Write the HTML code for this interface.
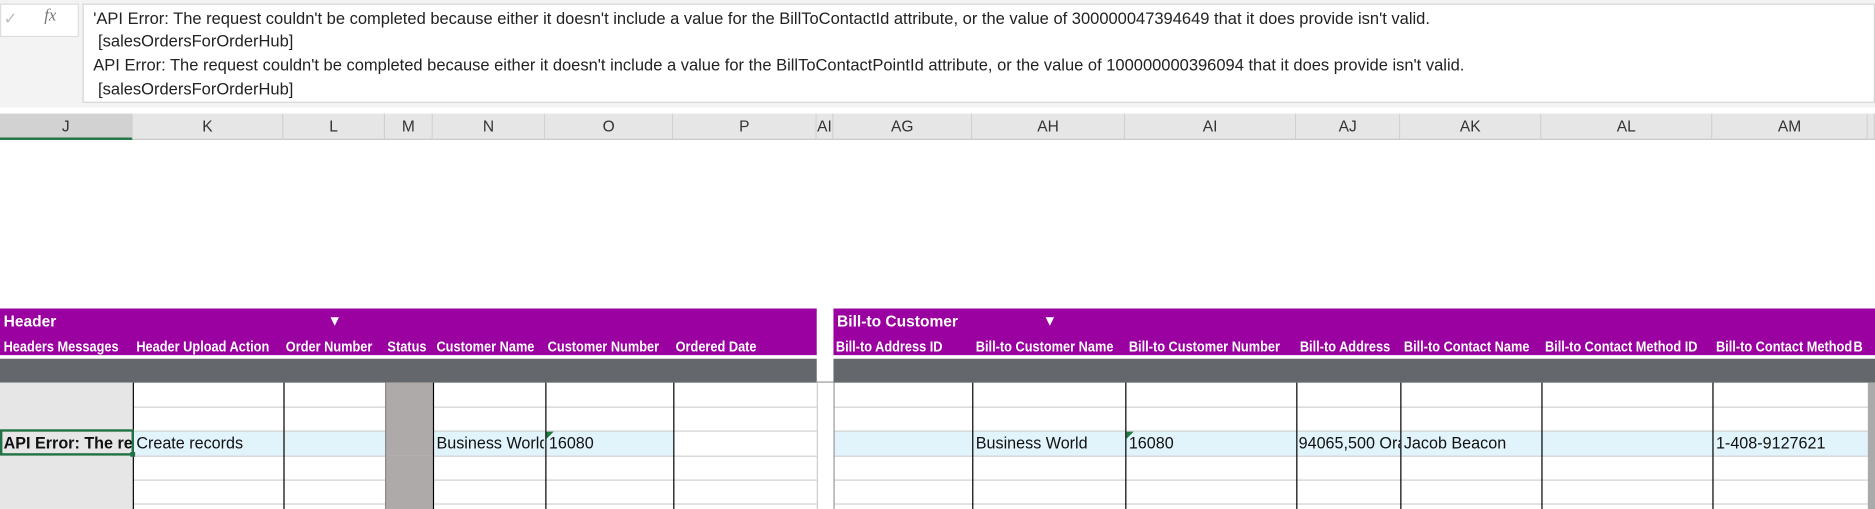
<!DOCTYPE html>
<html><head><meta charset="utf-8"><style>
html,body{margin:0;padding:0;background:#fff;overflow:hidden;width:1875px;height:509px}
#w{position:absolute;left:0;top:0;width:1568px;height:426px;transform:scale(1.19579);transform-origin:0 0;font-family:"Liberation Sans",sans-serif;background:#fff}
.a{position:absolute;white-space:nowrap}
.fb{left:0;top:0;width:1568px;height:90px;background:#f3f3f3}
.fx{left:69px;top:3px;width:1499px;height:83px;background:#fff;border:1px solid #d4d4d4;box-sizing:border-box}
.ft{font-size:13.8px;color:#222;left:78px;transform:scaleX(1.0);transform-origin:0 0}
.ch{top:95px;height:22px;background:#e6e6e6;border-bottom:1px solid #c8c8c8;box-sizing:border-box;font-size:13px;color:#333;text-align:center;line-height:22px;border-right:1px solid #d0d0d0}
.pur{top:258px;height:39px;background:#9b00a0}
.gb{top:300px;height:20px;background:#64676c}
.sh{top:283px;font-size:12px;font-weight:bold;color:#fff;transform:scaleX(.89);transform-origin:0 0}
.vl{top:320px;width:1px;height:106px;background:#000}
.hl{height:1px;background:#d0d0d0}
.dt{top:363px;font-size:13.5px;color:#111}
.tri{width:0;height:0;border-top:6px solid #1e7b3a;border-right:6px solid transparent}
</style></head><body><div id="w">
<div class="a fb"></div>
<div class="a" style="left:0;top:3px;width:66px;height:28px;background:#fff;border:1px solid #ddd;box-sizing:border-box"></div>
<div class="a" style="left:3px;top:7px;font-size:14px;color:#bbb">✓</div>
<div class="a" style="left:37px;top:6px;font-size:14px;font-style:italic;font-family:'Liberation Serif',serif;color:#777">fx</div>
<div class="a fx"></div>
<div class="a ft" style="top:8px">'API Error: The request couldn't be completed because either it doesn't include a value for the BillToContactId attribute, or the value of 300000047394649 that it does provide isn't valid.</div>
<div class="a ft" style="top:27px;left:82px">[salesOrdersForOrderHub]</div>
<div class="a ft" style="top:47px">API Error: The request couldn't be completed because either it doesn't include a value for the BillToContactPointId attribute, or the value of 100000000396094 that it does provide isn't valid.</div>
<div class="a ft" style="top:67px;left:82px">[salesOrdersForOrderHub]</div>

<div class="a ch" style="left:0;width:111px;background:#d2d2d2;border-bottom:2px solid #217346">J</div>
<div class="a ch" style="left:111px;width:126px">K</div>
<div class="a ch" style="left:237px;width:85px">L</div>
<div class="a ch" style="left:322px;width:40px">M</div>
<div class="a ch" style="left:362px;width:94px">N</div>
<div class="a ch" style="left:456px;width:107px">O</div>
<div class="a ch" style="left:563px;width:120px">P</div>
<div class="a ch" style="left:683px;width:14px;overflow:hidden">AI</div>
<div class="a ch" style="left:697px;width:116px">AG</div>
<div class="a ch" style="left:813px;width:128px">AH</div>
<div class="a ch" style="left:941px;width:143px">AI</div>
<div class="a ch" style="left:1084px;width:87px">AJ</div>
<div class="a ch" style="left:1171px;width:118px">AK</div>
<div class="a ch" style="left:1289px;width:143px">AL</div>
<div class="a ch" style="left:1432px;width:130px">AM</div>
<div class="a ch" style="left:1562px;width:6px"></div>

<div class="a pur" style="left:0;width:683px"></div>
<div class="a pur" style="left:697px;width:871px"></div>
<div class="a" style="left:3px;top:261px;font-size:13px;font-weight:bold;color:#fff">Header</div>
<div class="a" style="left:274px;top:261px;font-size:12px;color:#fff">▼</div>
<div class="a" style="left:700px;top:261px;font-size:13px;font-weight:bold;color:#fff">Bill-to Customer</div>
<div class="a" style="left:872px;top:261px;font-size:12px;color:#fff">▼</div>
<div class="a sh" style="left:3px">Headers Messages</div>
<div class="a sh" style="left:114px">Header Upload Action</div>
<div class="a sh" style="left:239px">Order Number</div>
<div class="a sh" style="left:324px">Status</div>
<div class="a sh" style="left:365px">Customer Name</div>
<div class="a sh" style="left:458px">Customer Number</div>
<div class="a sh" style="left:565px">Ordered Date</div>
<div class="a sh" style="left:699px">Bill-to Address ID</div>
<div class="a sh" style="left:816px">Bill-to Customer Name</div>
<div class="a sh" style="left:944px">Bill-to Customer Number</div>
<div class="a sh" style="left:1087px">Bill-to Address</div>
<div class="a sh" style="left:1174px">Bill-to Contact Name</div>
<div class="a sh" style="left:1292px">Bill-to Contact Method ID</div>
<div class="a sh" style="left:1435px">Bill-to Contact Method</div>
<div class="a sh" style="left:1550px">B</div>

<div class="a gb" style="left:0;width:683px"></div>
<div class="a gb" style="left:697px;width:871px"></div>
<div class="a" style="left:683px;top:319px;width:14px;height:1px;background:#999"></div>

<div class="a" style="left:0;top:320px;width:111px;height:106px;background:#e7e6e6"></div>
<div class="a" style="left:322px;top:320px;width:40px;height:106px;background:#aeaaaa"></div>
<div class="a" style="left:111px;top:360px;width:452px;height:21px;background:#e1f3fb"></div>
<div class="a" style="left:0;top:360px;width:111px;height:21px;background:#e7e6e6"></div>
<div class="a" style="left:322px;top:360px;width:40px;height:21px;background:#aeaaaa"></div>
<div class="a" style="left:697px;top:360px;width:865px;height:21px;background:#e1f3fb"></div>
<div class="a" style="left:1562px;top:320px;width:6px;height:106px;background:#aaa"></div>

<div class="a hl" style="left:111px;top:340px;width:211px"></div>
<div class="a hl" style="left:362px;top:340px;width:321px"></div>
<div class="a hl" style="left:111px;top:360px;width:211px"></div>
<div class="a hl" style="left:362px;top:360px;width:321px"></div>
<div class="a hl" style="left:111px;top:381px;width:211px"></div>
<div class="a hl" style="left:362px;top:381px;width:321px"></div>
<div class="a hl" style="left:111px;top:401px;width:211px"></div>
<div class="a hl" style="left:362px;top:401px;width:321px"></div>
<div class="a hl" style="left:111px;top:421px;width:211px"></div>
<div class="a hl" style="left:362px;top:421px;width:321px"></div>
<div class="a hl" style="left:697px;top:340px;width:865px"></div>
<div class="a hl" style="left:697px;top:360px;width:865px"></div>
<div class="a hl" style="left:697px;top:381px;width:865px"></div>
<div class="a hl" style="left:697px;top:401px;width:865px"></div>
<div class="a hl" style="left:697px;top:421px;width:865px"></div>

<div class="a vl" style="left:111px"></div>
<div class="a vl" style="left:237px"></div>
<div class="a vl" style="left:322px;background:#888"></div>
<div class="a vl" style="left:362px"></div>
<div class="a vl" style="left:456px"></div>
<div class="a vl" style="left:563px"></div>
<div class="a vl" style="left:683px;background:#ccc"></div>
<div class="a vl" style="left:697px;background:#999"></div>
<div class="a vl" style="left:813px"></div>
<div class="a vl" style="left:941px"></div>
<div class="a vl" style="left:1084px"></div>
<div class="a vl" style="left:1171px"></div>
<div class="a vl" style="left:1289px"></div>
<div class="a vl" style="left:1432px"></div>

<div class="a dt" style="left:0;width:111px;overflow:hidden;font-weight:bold;padding-left:3px;box-sizing:border-box">API Error: The request</div>
<div class="a" style="left:0;top:359px;width:112px;height:22px;border:2px solid #217346;box-sizing:border-box"></div>
<div class="a" style="left:109px;top:378px;width:4px;height:4px;background:#217346"></div>
<div class="a dt" style="left:114px">Create records</div>
<div class="a dt" style="left:365px;width:90px;overflow:hidden">Business World</div>
<div class="a dt" style="left:459px">16080</div>
<div class="a tri" style="left:457px;top:361px"></div>
<div class="a dt" style="left:816px">Business World</div>
<div class="a dt" style="left:944px">16080</div>
<div class="a tri" style="left:942px;top:361px"></div>
<div class="a dt" style="left:1086px;width:85px;overflow:hidden">94065,500 Oracle</div>
<div class="a dt" style="left:1174px">Jacob Beacon</div>
<div class="a dt" style="left:1435px">1-408-9127621</div>
</div></body></html>
